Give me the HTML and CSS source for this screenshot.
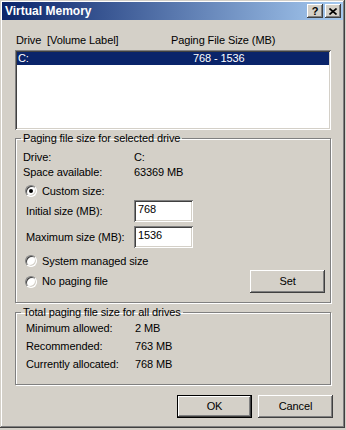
FILE: index.html
```html
<!DOCTYPE html>
<html lang="en">
<head>
    <meta charset="UTF-8">
    <title>Virtual Memory</title>
    <link rel="stylesheet" href="styles.css">
</head>
<body>
    <div class="window">
        <div class="titlebar">
            <span class="title">Virtual Memory</span>
            <div class="caption-btns">
                <span class="cbtn help">?</span>
                <span class="cbtn close">
                    <svg width="8" height="7" viewBox="0 0 8 7"><path d="M0.5 0.5 L7.5 6.5 M7.5 0.5 L0.5 6.5" stroke="#000" stroke-width="1.6" fill="none"/></svg>
                </span>
            </div>
        </div>

        <div class="content">
            <div class="list-head">
                <span class="col-drive">Drive&nbsp; [Volume Label]</span>
                <span>Paging File Size (MB)</span>
            </div>
            <div class="list">
                <div class="list-row selected">
                    <span class="col-drive">C:</span>
                    <span class="col-size">768 - 1536</span>
                </div>
            </div>

            <fieldset class="group group-drive">
                <legend>Paging file size for selected drive</legend>
                <div class="info-row"><span class="info-label">Drive:</span><span>C:</span></div>
                <div class="info-row"><span class="info-label">Space available:</span><span>63369 MB</span></div>
                <div class="radio-row custom"><span class="radio checked"></span><span>Custom size:</span></div>
                <div class="field-row"><span class="field-label">Initial size (MB):</span><span class="textbox">768</span></div>
                <div class="field-row second"><span class="field-label">Maximum size (MB):</span><span class="textbox">1536</span></div>
                <div class="radio-row system"><span class="radio"></span><span>System managed size</span></div>
                <div class="radio-row nopaging"><span class="radio"></span><span class="grow">No paging file</span><span class="btn set">Set</span></div>
            </fieldset>

            <fieldset class="group group-total">
                <legend>Total paging file size for all drives</legend>
                <div class="total-row"><span class="total-label">Minimum allowed:</span><span>2 MB</span></div>
                <div class="total-row"><span class="total-label">Recommended:</span><span>763 MB</span></div>
                <div class="total-row"><span class="total-label">Currently allocated:</span><span>768 MB</span></div>
            </fieldset>

            <div class="footer">
                <span class="btn default">OK</span>
                <span class="btn">Cancel</span>
            </div>
        </div>
    </div>
</body>
</html>
```

FILE: styles.css
```css
* {
    box-sizing: border-box;
}

body {
    margin: 0;
    background: #d4d0c8;
    font-family: "Liberation Sans", Arial, sans-serif;
    font-size: 11px;
    line-height: 13px;
    letter-spacing: -0.1px;
    color: #000;
}

.window {
    width: 345px;
    height: 428px;
    padding: 2px;
    background: #d4d0c8;
    box-shadow: inset -1px -1px #404040, inset 1px 1px #d4d0c8, inset -2px -2px #808080, inset 2px 2px #ffffff;
}

/* title bar */
.titlebar {
    height: 18px;
    display: flex;
    align-items: center;
    justify-content: space-between;
    padding: 0 2px 0 3px;
    background: linear-gradient(to right, #0a246a, #a6caf0);
}

.title {
    color: #fff;
    font-weight: bold;
    font-size: 12px;
    letter-spacing: 0;
}

.caption-btns {
    display: flex;
    gap: 2px;
}

.cbtn {
    width: 16px;
    height: 14px;
    display: flex;
    align-items: center;
    justify-content: center;
    background: #d4d0c8;
    font-weight: bold;
    font-size: 11px;
    box-shadow: inset -1px -1px #404040, inset 1px 1px #ffffff, inset -2px -2px #808080;
}

/* dialog body */
.content {
    padding: 14px 12px 0 13px;
}

.list-head {
    display: flex;
    height: 13px;
    margin-bottom: 3px;
    padding-left: 1px;
}

.list-head .col-drive {
    width: 155px;
}

.list {
    height: 80px;
    background: #fff;
    padding: 2px;
    box-shadow: inset 1px 1px #808080, inset -1px -1px #ffffff, inset 2px 2px #404040, inset -2px -2px #d4d0c8;
}

.list-row {
    display: flex;
    height: 13px;
    padding-left: 1px;
}

.list-row.selected {
    background: #0a246a;
    color: #fff;
}

.list-row .col-drive {
    width: 175px;
}

/* group boxes */
.group {
    margin: 2px 0 0;
    padding: 5px 5px 9px 7px;
    border: 1px solid #808080;
    box-shadow: inset 1px 1px #ffffff, 1px 1px #ffffff;
    min-width: 0;
}

.group legend {
    padding: 0 2px;
    margin-left: -2px;
}

.info-row {
    display: flex;
    height: 15px;
    align-items: center;
}

.info-label {
    width: 111px;
}

.radio-row {
    display: flex;
    align-items: center;
    gap: 5px;
    padding-left: 2px;
    height: 16px;
}

.radio-row.custom {
    height: 18px;
    margin-top: 2px;
}

.radio-row.system {
    margin-top: 5px;
}

.radio-row.nopaging {
    height: 23px;
    margin-top: 1px;
}

.grow {
    flex: 1;
}

.radio {
    width: 12px;
    height: 12px;
    border-radius: 50%;
    background: #fff;
    border: 1px solid;
    border-color: #808080 #ffffff #ffffff #808080;
    box-shadow: inset 1px 1px #404040, inset -1px -1px #d4d0c8;
    display: flex;
    align-items: center;
    justify-content: center;
}

.radio.checked::after {
    content: "";
    width: 4px;
    height: 4px;
    border-radius: 50%;
    background: #000;
}

.field-row {
    display: flex;
    align-items: center;
    height: 22px;
    padding-left: 3px;
}

.field-row.second {
    margin-top: 4px;
}

.field-label {
    width: 108px;
}

.textbox {
    width: 59px;
    height: 22px;
    padding: 3px 4px;
    background: #fff;
    box-shadow: inset 1px 1px #808080, inset -1px -1px #ffffff, inset 2px 2px #404040, inset -2px -2px #d4d0c8;
}

.btn {
    width: 75px;
    height: 23px;
    display: flex;
    align-items: center;
    justify-content: center;
    background: #d4d0c8;
    box-shadow: inset -1px -1px #404040, inset 1px 1px #ffffff, inset -2px -2px #808080;
}

.btn.default {
    border: 1px solid #000;
}

.group-total {
    margin-top: 3px;
    padding: 0 5px 11px 10px;
}

.group-total legend {
    margin-left: -5px;
}

.total-row {
    display: flex;
    height: 18px;
    align-items: center;
}

.total-label {
    width: 109px;
}

.footer {
    display: flex;
    justify-content: flex-end;
    gap: 6px;
    margin: 10px -2px 0 0;
}
```
